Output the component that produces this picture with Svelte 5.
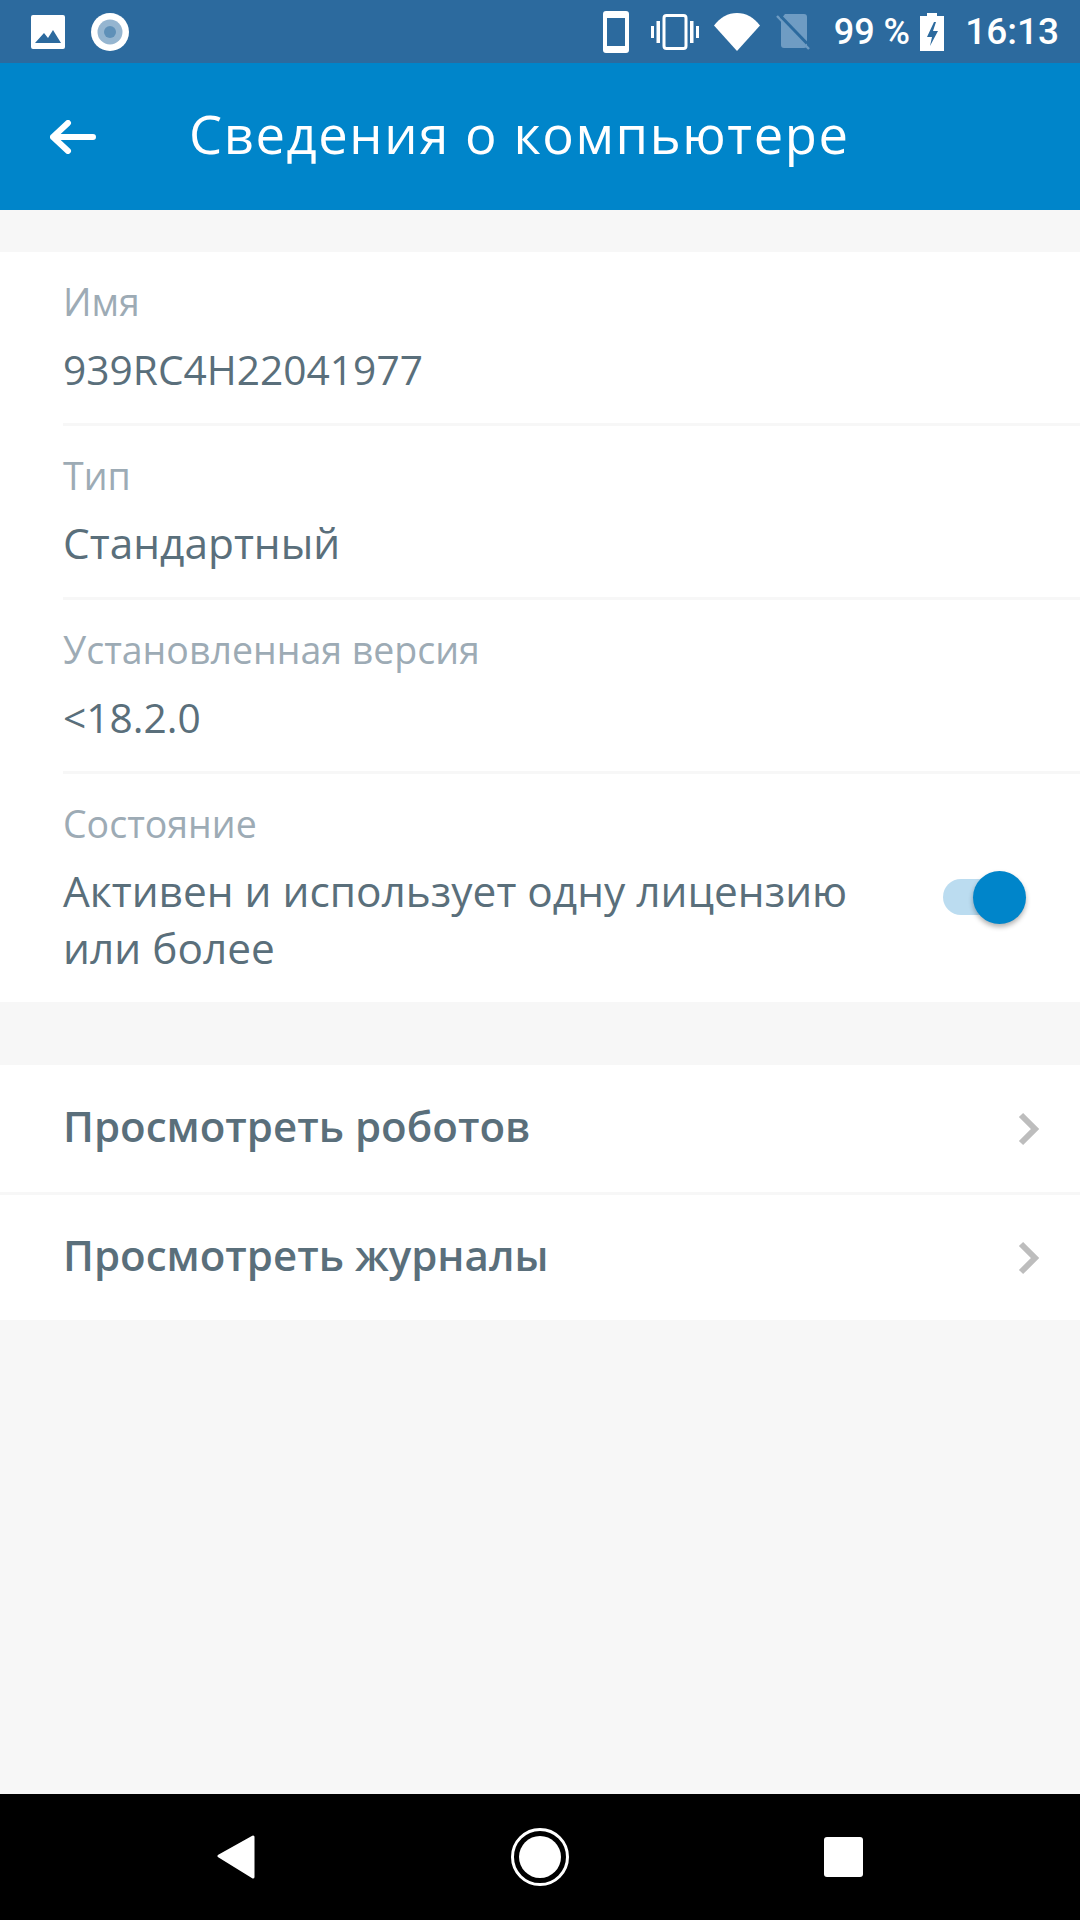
<script>
  const fields = [
    { label: 'Имя', value: '939RC4H22041977', latin: true },
    { label: 'Тип', value: 'Стандартный' },
    { label: 'Установленная версия', value: '<18.2.0', latin: true }
  ]
  const links = ['Просмотреть роботов', 'Просмотреть журналы']
</script>

<div class="screen">
  <div class="statusbar">
    <svg class="picture" viewBox="0 0 34 34" width="34" height="34">
      <path fill="#fff" fill-rule="evenodd" d="M2 0h30a2 2 0 0 1 2 2v30a2 2 0 0 1-2 2H2a2 2 0 0 1-2-2V2a2 2 0 0 1 2-2zM4 28h26l-8-13-5 8-4-5z" />
    </svg>
    <svg class="record" viewBox="0 0 38 38" width="38" height="38">
      <circle cx="19" cy="19" r="19" fill="#fff" />
      <circle cx="19" cy="19" r="12.500" fill="#95b5d0" />
      <circle cx="19" cy="19" r="6" fill="#5f90b8" />
    </svg>
    <div class="spacer"></div>
    <svg class="phone" viewBox="0 0 26 42" width="26" height="42">
      <path fill="#fff" fill-rule="evenodd" d="M3 0h20a3 3 0 0 1 3 3v36a3 3 0 0 1-3 3H3a3 3 0 0 1-3-3V3a3 3 0 0 1 3-3zM4 7v28h18V7z" />
    </svg>
    <svg class="vibrate" viewBox="0 0 48 36" width="48" height="36">
      <path fill="#fff" d="M0 12h3v12H0zM5.500 7h3.500v22H5.500zM39 7h3.500v22H39zM45 12h3v12h-3z" />
      <rect x="13" y="1.500" width="22" height="33" rx="2.500" fill="none" stroke="#fff" stroke-width="3" />
    </svg>
    <svg class="wifi" viewBox="0 0 46 38" width="46" height="38">
      <path fill="#fff" d="M0 12.500C6 4.500 14 0 23 0s17 4.500 23 12.500L23 38z" />
    </svg>
    <svg class="sim" viewBox="0 0 34 36" width="34" height="36">
      <path fill="#6f9cc3" d="M9 0h19a3 3 0 0 1 3 3v28a3 3 0 0 1-3 3H8a3 3 0 0 1-3-3V5z" />
      <path stroke="#6f9cc3" stroke-width="2.500" d="M1 2l32 33" />
      <path stroke="#2c6a9e" stroke-width="3" d="M5 2.500l26 27" />
    </svg>
    <span class="battery-pct">99 %</span>
    <svg class="battery" viewBox="0 0 24 38" width="24" height="38">
      <path fill="#fff" fill-rule="evenodd" d="M7 0h10v3h7v35H0V3h7zM14 9l-7 15h5l-2 9 8-15h-5l3-9z" />
    </svg>
    <span class="clock">16:13</span>
  </div>

  <header class="appbar">
    <svg class="back" viewBox="0 0 46 34" width="46" height="34">
      <path d="M3 17h40M18 3L3 17l15 14" fill="none" stroke="#fff" stroke-width="6" stroke-linecap="round" stroke-linejoin="round" />
    </svg>
    <h1>Сведения о компьютере</h1>
  </header>

  <main class="content">
    <section class="card details">
      {#each fields as f}
        <div class="field">
          <div class="label">{f.label}</div>
          <div class="value" class:latin={f.latin}>{f.value}</div>
        </div>
      {/each}
      <div class="field last">
        <div class="label">Состояние</div>
        <div class="state">
          <div class="value">Активен и использует одну лицензию или более</div>
          <div class="switch"><div class="track"></div><div class="thumb"></div></div>
        </div>
      </div>
    </section>

    <section class="card links">
      {#each links as link}
        <div class="link">
          <span>{link}</span>
          <svg viewBox="0 0 22 34" width="22" height="34">
            <path d="M3 3l14 14L3 31" fill="none" stroke="#bdbdbd" stroke-width="6" />
          </svg>
        </div>
      {/each}
    </section>
  </main>

  <nav class="navbar">
    <svg viewBox="0 0 38 44" width="38" height="44">
      <path fill="#fff" stroke="#fff" stroke-width="3" stroke-linejoin="round" d="M36 2v40L2 21z" />
    </svg>
    <svg viewBox="0 0 58 58" width="58" height="58">
      <circle cx="29" cy="29" r="27.500" fill="none" stroke="#fff" stroke-width="3" />
      <circle cx="29" cy="29" r="21" fill="#fff" />
    </svg>
    <div class="square"></div>
  </nav>
</div>

<style>
  :global(body) {
    margin: 0;
    background: #f7f7f7;
  }

  .screen {
    width: 1080px;
    height: 1920px;
    display: flex;
    flex-direction: column;
    font-family: "Open Sans", sans-serif;
    overflow: hidden;
  }

  .statusbar {
    height: 63px;
    flex: none;
    background: #2c6a9e;
    display: flex;
    align-items: center;
    padding: 0 21px 0 31px;
    box-sizing: border-box;
    color: #fff;
    font-family: Roboto, sans-serif;
    font-weight: 500;
  }

  .record { margin-left: 26px; }
  .spacer { flex: 1; }
  .vibrate { margin-left: 22px; }
  .wifi { margin-left: 15px; }
  .sim { margin-left: 16px; }

  .battery-pct {
    font-size: 36px;
    margin-left: 24px;
  }

  .battery { margin-left: 10px; }

  .clock {
    font-size: 37px;
    margin-left: 21px;
  }

  .appbar {
    height: 147px;
    flex: none;
    background: #0085ca;
    display: flex;
    align-items: center;
    padding-left: 50px;
  }

  .appbar h1 {
    margin: 0 0 6px 93px;
    font-size: 52.500px;
    font-weight: 400;
    color: #fff;
    letter-spacing: 1.600px;
  }

  .content {
    flex: 1;
    padding-top: 42px;
  }

  .card { background: #fff; }

  .details { padding-left: 63px; }

  .field {
    height: 174px;
    box-sizing: border-box;
    border-bottom: 3px solid #f7f7f7;
    padding-top: 27px;
  }

  .field.last {
    height: 228px;
    border-bottom: 0;
  }

  .label {
    font-size: 37.500px;
    line-height: 46px;
    color: #9dabb5;
  }

  .value {
    font-size: 42.400px;
    line-height: 57px;
    margin-top: 15px;
    color: #5a6f7b;
  }

  .value.latin {
    font-size: 40.700px;
    margin-top: 16px;
  }

  .state {
    display: flex;
    align-items: flex-start;
    justify-content: space-between;
    padding-right: 54px;
  }

  .state .value { width: 830px; }

  .switch {
    position: relative;
    width: 83px;
    height: 52px;
    flex: none;
    margin-top: 24px;
  }

  .track {
    position: absolute;
    left: 0;
    top: 8px;
    width: 70px;
    height: 36px;
    border-radius: 18px;
    background: #bbdcf0;
  }

  .thumb {
    position: absolute;
    right: 0;
    top: 0;
    width: 53px;
    height: 53px;
    border-radius: 50%;
    background: #0085ca;
    box-shadow: 0 3px 5px rgba(0, 0, 0, 0.3);
  }

  .links { margin-top: 63px; }

  .link {
    height: 127px;
    box-sizing: border-box;
    display: flex;
    align-items: center;
    justify-content: space-between;
    padding: 0 40px 0 63px;
    font-size: 42px;
    font-weight: 600;
    color: #5a6f7b;
  }

  .link span { margin-bottom: 6px; }

  .link + .link {
    height: 128px;
    border-top: 3px solid #f7f7f7;
  }

  .navbar {
    height: 126px;
    flex: none;
    background: #000;
    display: flex;
    align-items: center;
    justify-content: space-between;
    padding: 0 217px;
  }

  .square {
    width: 39px;
    height: 40px;
    border-radius: 3px;
    background: #fff;
  }
</style>
